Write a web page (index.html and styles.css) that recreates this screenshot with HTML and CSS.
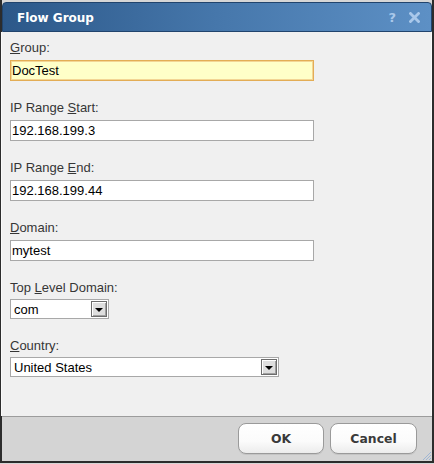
FILE: index.html
```html
<!DOCTYPE html>
<html>
<head>
<meta charset="utf-8">
<title>Flow Group</title>
<link rel="stylesheet" href="styles.css">
</head>
<body>
<div class="window">
  <div class="titlebar">
    <span class="title">Flow Group</span>
    <span class="tools">
      <span class="help">?</span>
      <svg class="close" width="11" height="11" viewBox="0 0 11 11"><path d="M1.5 1.5 L9.5 9.5 M9.5 1.5 L1.5 9.5" stroke="#a9c8ea" stroke-width="2.8" stroke-linecap="square"/></svg>
    </span>
  </div>
  <div class="content">
    <div class="field">
      <label class="lbl"><u>G</u>roup:</label>
      <input class="txt focus" type="text" value="DocTest">
    </div>
    <div class="field">
      <label class="lbl">IP Range <u>S</u>tart:</label>
      <input class="txt" type="text" value="192.168.199.3">
    </div>
    <div class="field">
      <label class="lbl">IP Range <u>E</u>nd:</label>
      <input class="txt" type="text" value="192.168.199.44">
    </div>
    <div class="field">
      <label class="lbl"><u>D</u>omain:</label>
      <input class="txt" type="text" value="mytest">
    </div>
    <div class="field sel-field">
      <label class="lbl">Top <u>L</u>evel Domain:</label>
      <div class="select small"><span class="val">com</span><span class="btn"><span class="arrow"></span></span></div>
    </div>
    <div class="field sel-field">
      <label class="lbl"><u>C</u>ountry:</label>
      <div class="select wide"><span class="val">United States</span><span class="btn"><span class="arrow"></span></span></div>
    </div>
  </div>
  <div class="footer">
    <button class="pbtn ok">OK</button>
    <button class="pbtn cancel">Cancel</button>
    <svg class="grip" width="12" height="12" viewBox="0 0 12 12"><path d="M11 3 L3 11 M11 6 L6 11 M11 9 L9 11" stroke="#9fb6d4" stroke-width="1"/></svg>
  </div>
</div>
</body>
</html>
```
FILE: styles.css
```css
html, body {
  margin: 0;
  padding: 0;
  background: #d6d6d6;
}
.window {
  box-sizing: border-box;
  width: 434px;
  height: 463px;
  display: flex;
  flex-direction: column;
  padding-top: 2px;
  border-left: 2px solid #2c2c2c;
  border-right: 2px solid #2c2c2c;
  border-bottom: 2px solid #2c2c2c;
  background: #d6d6d6;
  position: relative;
}
.titlebar {
  box-sizing: border-box;
  height: 30px;
  background: linear-gradient(to right, #2c5889 0%, #4677ab 50%, #5d90c5 100%);
  border: 1px solid #21446d;
  border-radius: 4px 4px 0 0;
  display: flex;
  align-items: center;
  justify-content: space-between;
  padding: 0 11px 0 14px;
}
.title {
  font-family: "DejaVu Sans", sans-serif;
  font-weight: bold;
  font-size: 12px;
  color: #ffffff;
  margin-top: 1px;
}
.tools {
  display: flex;
  align-items: center;
  gap: 13px;
}
.help {
  font-family: "DejaVu Sans", sans-serif;
  font-weight: bold;
  font-size: 13px;
  color: #a9c8ea;
  line-height: 13px;
}
.close {
  display: block;
}
.content {
  flex: 1;
  background: #f0f0f0;
  padding: 8px 0 0 8px;
  border-left: 1px solid #fafafa;
  border-right: 1px solid #fafafa;
  margin-left: -1px;
}
.field {
  display: flex;
  flex-direction: column;
  align-items: flex-start;
  margin-bottom: 19px;
}
.lbl {
  font-family: "Liberation Sans", Arial, sans-serif;
  font-size: 13px;
  line-height: 15px;
  color: #363636;
  margin-bottom: 5px;
}
.txt {
  box-sizing: border-box;
  width: 304px;
  height: 21px;
  margin: 0;
  padding: 0 1px;
  border: 1px solid #a8a8a8;
  background: #ffffff;
  font-family: "Liberation Sans", Arial, sans-serif;
  font-size: 13px;
  color: #000;
  outline: none;
}
.txt.focus {
  background: #ffffc8;
  border: 1px solid #e3ad55;
  box-shadow: inset 0 0 0 1px #f3d594;
}
.sel-field .lbl {
  margin-bottom: 4px;
}
.sel-field {
  margin-bottom: 19px;
}
.select {
  box-sizing: border-box;
  height: 20px;
  border: 1px solid #a8a8a8;
  background: #ffffff;
  display: flex;
  align-items: center;
  justify-content: space-between;
  padding: 0 1px 0 0;
}
.select.small { width: 99px; }
.select.wide { width: 269px; }
.val {
  font-family: "Liberation Sans", Arial, sans-serif;
  font-size: 13px;
  color: #000;
  padding-left: 3px;
}
.btn {
  box-sizing: border-box;
  width: 16px;
  height: 16px;
  border: 1px solid #6c6c6c;
  box-shadow: inset 1px 1px 0 #ffffff, inset -1px -1px 0 #a0a0a0;
  background: #dedede;
  display: flex;
  align-items: center;
  justify-content: center;
}
.arrow {
  width: 0;
  height: 0;
  border-left: 4px solid transparent;
  border-right: 4px solid transparent;
  border-top: 4px solid #000;
  margin-top: 1px;
}
.footer {
  box-sizing: border-box;
  height: 45px;
  border-top: 1px solid #9c9c9c;
  background: #d4d4d4;
  display: flex;
  justify-content: flex-end;
  align-items: flex-start;
  gap: 6px;
  padding: 6px 15px 0 0;
  position: relative;
}
.pbtn {
  box-sizing: border-box;
  height: 31px;
  margin: 0;
  border: 1px solid #9a9a9a;
  border-radius: 8px;
  background: linear-gradient(#ffffff 0%, #fbfbfb 60%, #ececec 100%);
  box-shadow: 0 1px 0 #c4c4c4;
  font-family: "DejaVu Sans", sans-serif;
  font-weight: bold;
  font-size: 12.4px;
  color: #3a3a3a;
  padding: 0;
}
.ok { width: 86px; }
.cancel { width: 87px; }
.grip {
  position: absolute;
  right: 0;
  bottom: 0;
}
```
